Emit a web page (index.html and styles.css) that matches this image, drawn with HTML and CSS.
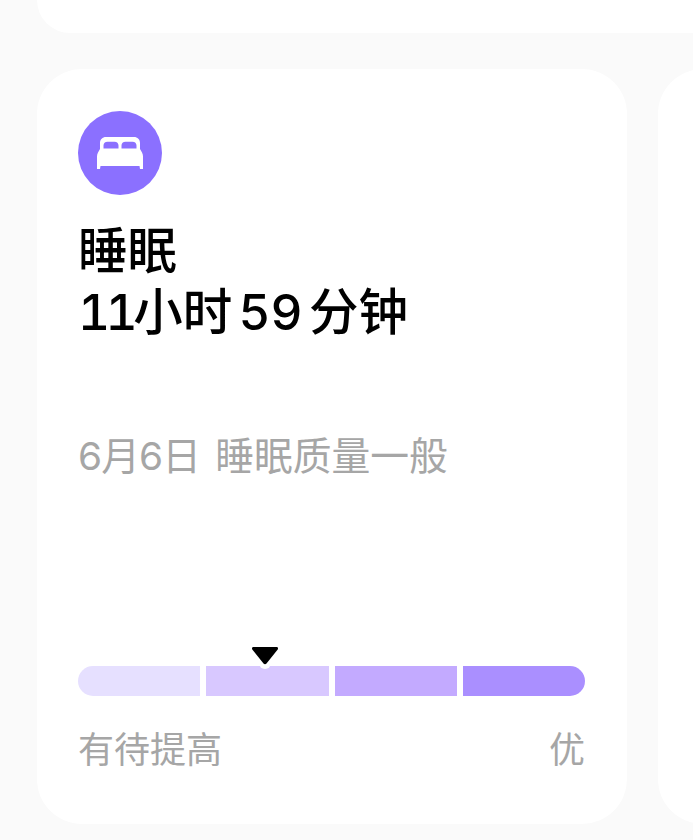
FILE: index.html
```html
<!DOCTYPE html>
<html lang="zh-CN">
<head>
    <meta charset="UTF-8">
    <meta name="viewport" content="width=device-width, initial-scale=1.0">
    <title>睡眠</title>
    <link rel="stylesheet" href="styles.css">
</head>
<body>
    <div class="top-card"></div>

    <div class="card-row">
        <section class="card">
            <div class="icon-circle">
                <svg class="bed-icon" viewBox="0 0 46 32" width="46" height="32">
                    <path fill="#fff" fill-rule="evenodd" d="M3 12V6C3 2.500 5.500 0 9 0H37C40.500 0 43 2.500 43 6V12L45 15.500C45.700 16.700 46 18 46 19.500V32H43L42.500 29H3.500L3 32H0V19.500C0 18 .3 16.700 1 15.500ZM6.500 11.500V8.500C6.500 6 8 4.700 10.500 4.700H17.500C20 4.700 21.500 6 21.500 8.500V11.500ZM24.500 11.500V8.500C24.500 6 26 4.700 28.500 4.700H35.500C38 4.700 39.500 6 39.500 8.500V11.500Z"/>
                </svg>
            </div>

            <h1 class="title">睡眠<br><span class="ones">11</span>小时 59 分钟</h1>
            <p class="summary"><span class="date">6月6日</span><span>睡眠质量一般</span></p>

            <div class="scale">
                <div class="seg seg-1"></div>
                <div class="seg seg-2">
                    <svg class="marker" viewBox="0 0 30 24" width="30" height="24">
                        <circle cx="15" cy="17" r="6" fill="#fff"/>
                        <path d="M2 2.500C2 1.500 2.500 1 3.500 1H26.500C27.500 1 28 1.500 28 2.500C28 3 27.800 3.300 27.500 3.700L16.500 17.500C15.700 18.500 14.300 18.500 13.500 17.500L2.500 3.700C2.200 3.300 2 3 2 2.500Z"/>
                    </svg>
                </div>
                <div class="seg seg-3"></div>
                <div class="seg seg-4"></div>
            </div>

            <div class="scale-labels">
                <span>有待提高</span>
                <span>优</span>
            </div>
        </section>

        <section class="card card-next"></section>
    </div>
</body>
</html>
```

FILE: styles.css
```css
body {
    margin: 0;
    height: 840px;
    overflow: hidden;
    background-color: #fafafa;
    font-family: "Inter", "Noto Sans CJK SC", sans-serif;
}
.top-card {
    height: 33px;
    margin-left: 37px;
    background-color: #fff;
    border-radius: 0 0 0 45px;
}
.card-row {
    display: flex;
    gap: 31px;
    height: 755px;
    margin-top: 36px;
    margin-left: 37px;
    overflow: hidden;
}
.card {
    flex: none;
    box-sizing: border-box;
    width: 590px;
    height: 755px;
    padding: 42px 42px 0 41px;
    background-color: #fff;
    border-radius: 45px;
    will-change: opacity;
}
.icon-circle {
    display: flex;
    align-items: center;
    justify-content: center;
    width: 84px;
    height: 84px;
    border-radius: 50%;
    background-color: #8b70ff;
}
.title {
    margin: 26px 0 0;
    font-size: 49.5px;
    font-weight: 500;
    line-height: 61px;
    color: #000;
    font-feature-settings: "tnum";
    word-spacing: -7px;
}
.ones {
    letter-spacing: -4.5px;
}
.summary {
    display: flex;
    gap: 15px;
    margin: 86px 0 0;
    font-size: 38.8px;
    line-height: 54px;
    color: #a6a6a6;
}
.date {
    letter-spacing: -0.9px;
}
.scale {
    display: flex;
    gap: 6px;
    height: 30px;
    margin-top: 183px;
}
.seg {
    position: relative;
    flex: 1;
}
.seg-1 {
    background-color: #e6e0ff;
    border-radius: 15px 0 0 15px;
}
.seg-2 {
    background-color: #d8c8ff;
}
.seg-3 {
    background-color: #c3aaff;
}
.seg-4 {
    background-color: #aa8fff;
    border-radius: 0 15px 15px 0;
}
.marker {
    position: absolute;
    left: 44px;
    top: -20px;
}
.scale-labels {
    display: flex;
    justify-content: space-between;
    margin-top: 29px;
    font-size: 36px;
    line-height: 50px;
    color: #a6a6a6;
}
```
